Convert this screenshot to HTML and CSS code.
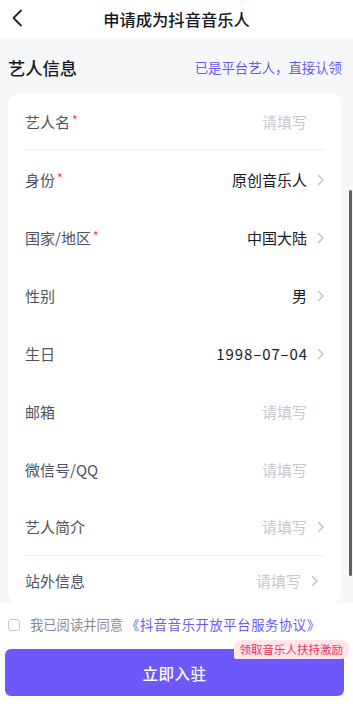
FILE: index.html
```html
<!DOCTYPE html>
<html lang="zh">
<head>
<meta charset="utf-8">
<title>申请成为抖音音乐人</title>
<link rel="stylesheet" href="styles.css">
</head>
<body>
<div class="page">
  <header class="topbar">
    <svg class="back" width="12" height="18" viewBox="0 0 12 18"><path d="M10 1.5 L2.5 9 L10 16.5" fill="none" stroke="#1f2126" stroke-width="1.8" stroke-linecap="round" stroke-linejoin="round"/></svg>
    <h1 class="title">申请成为抖音音乐人</h1>
  </header>
  <main class="scroller">
    <div class="section-head">
      <h2 class="section-title">艺人信息</h2>
      <a class="claim">已是平台艺人，直接认领</a>
    </div>
    <div class="card">
      <div class="row sep">
        <span class="label">艺人名<i class="req">*</i></span>
        <span class="value ph">请填写</span><span class="chev-slot"></span>
      </div>
      <div class="row">
        <span class="label">身份<i class="req">*</i></span>
        <span class="value">原创音乐人</span><span class="chev-slot"><svg width="8" height="12" viewBox="0 0 8 12"><path d="M1.5 1.5 L6 6 L1.5 10.5" fill="none" stroke="#c3c5ca" stroke-width="1.6" stroke-linecap="round" stroke-linejoin="round"/></svg></span>
      </div>
      <div class="row">
        <span class="label">国家/地区<i class="req">*</i></span>
        <span class="value">中国大陆</span><span class="chev-slot"><svg width="8" height="12" viewBox="0 0 8 12"><path d="M1.5 1.5 L6 6 L1.5 10.5" fill="none" stroke="#c3c5ca" stroke-width="1.6" stroke-linecap="round" stroke-linejoin="round"/></svg></span>
      </div>
      <div class="row">
        <span class="label">性别</span>
        <span class="value">男</span><span class="chev-slot"><svg width="8" height="12" viewBox="0 0 8 12"><path d="M1.5 1.5 L6 6 L1.5 10.5" fill="none" stroke="#c3c5ca" stroke-width="1.6" stroke-linecap="round" stroke-linejoin="round"/></svg></span>
      </div>
      <div class="row">
        <span class="label">生日</span>
        <span class="value date">1998–07–04</span><span class="chev-slot"><svg width="8" height="12" viewBox="0 0 8 12"><path d="M1.5 1.5 L6 6 L1.5 10.5" fill="none" stroke="#c3c5ca" stroke-width="1.6" stroke-linecap="round" stroke-linejoin="round"/></svg></span>
      </div>
      <div class="row">
        <span class="label">邮箱</span>
        <span class="value ph">请填写</span><span class="chev-slot"></span>
      </div>
      <div class="row">
        <span class="label">微信号/QQ</span>
        <span class="value ph">请填写</span><span class="chev-slot"></span>
      </div>
      <div class="row sep">
        <span class="label">艺人简介</span>
        <span class="value ph">请填写</span><span class="chev-slot"><svg width="8" height="12" viewBox="0 0 8 12"><path d="M1.5 1.5 L6 6 L1.5 10.5" fill="none" stroke="#c3c5ca" stroke-width="1.6" stroke-linecap="round" stroke-linejoin="round"/></svg></span>
      </div>
      <div class="row last">
        <span class="label">站外信息</span>
        <span class="value ph">请填写</span><span class="chev-slot"><svg width="8" height="12" viewBox="0 0 8 12"><path d="M1.5 1.5 L6 6 L1.5 10.5" fill="none" stroke="#c3c5ca" stroke-width="1.6" stroke-linecap="round" stroke-linejoin="round"/></svg></span>
      </div>
    </div>
    <div class="scrollbar"></div>
  </main>
  <footer class="footer">
    <label class="agree">
      <span class="check"></span>
      <span class="agree-text">我已阅读并同意<a class="protocol">《抖音音乐开放平台服务协议》</a></span>
    </label>
    <div class="submit-wrap">
      <button class="submit">立即入驻</button>
      <span class="badge">领取音乐人扶持激励</span>
    </div>
  </footer>
</div>
</body>
</html>
```

FILE: styles.css
```css
* { box-sizing: border-box; }
html, body { margin: 0; padding: 0; }
body {
  width: 353px;
  height: 718px;
  overflow: hidden;
  background: #fff;
  font-family: "Noto Sans CJK SC", "Noto Sans", sans-serif;
  color: #161823;
}
.page { display: flex; flex-direction: column; height: 718px; }

.topbar {
  height: 38px;
  flex: none;
  display: flex;
  align-items: center;
  justify-content: center;
  position: relative;
  background: #fff;
}
.back { position: absolute; left: 11px; top: 9px; }
.title {
  margin: 0;
  font-size: 16.3px;
  font-weight: 500;
  line-height: 1;
  color: #161823;
}

.scroller {
  height: 565px;
  flex: none;
  background: #f6f7f9;
  overflow: hidden;
  position: relative;
  padding: 0 12px 0 8px;
}
.section-head {
  height: 55px;
  display: flex;
  align-items: center;
  justify-content: space-between;
  padding-top: 5px;
}
.section-title {
  margin: 0;
  font-size: 17.3px;
  font-weight: 500;
  color: #161823;
  line-height: 1;
}
.claim {
  font-size: 13.4px;
  color: #6a5af5;
  line-height: 1;
  margin-right: -1px;
}

.card {
  background: #fff;
  border-radius: 12px;
  padding: 0 16px 0 16px;
}
.row {
  height: 58px;
  display: flex;
  align-items: center;
  font-size: 15px;
  line-height: 1;
}
.row:first-child { height: 57px; }
.row.sep { border-bottom: 1px solid #f2f3f5; }
.row.last { height: 48px; padding-right: 6px; }
.label {
  flex: 1;
  color: #4f535e;
  display: flex;
  align-items: flex-start;
  padding-left: 1px;
}
.req {
  font-style: normal;
  color: #fe2c55;
  font-size: 12px;
  margin-left: 2px;
  margin-top: 0px;
}
.value { color: #161823; }
.value.date { letter-spacing: 0.9px; margin-right: -1px; }
.value.ph { color: #c6c8cd; }
.chev-slot {
  width: 18px;
  display: flex;
  justify-content: flex-end;
  align-items: center;
}
.chev-slot svg { display: block; margin-top: 1px; }

.scrollbar {
  position: absolute;
  right: 1px;
  top: 152px;
  width: 3px;
  height: 386px;
  border-radius: 2px;
  background: #5e6066;
}

.footer {
  flex: 1;
  background: #fff;
  padding: 13px 9px 0 5px;
}
.agree {
  display: flex;
  align-items: center;
  height: 18px;
  padding-left: 3px;
}
.check {
  width: 12px;
  height: 12px;
  border: 1px solid #c6c8cd;
  border-radius: 3px;
  flex: none;
}
.agree-text {
  margin-left: 10px;
  font-size: 13.3px;
  color: #8a8d95;
  line-height: 1;
  white-space: nowrap;
}
.protocol { color: #6a5af5; letter-spacing: 0.6px; margin-left: 3px; }
.submit-wrap {
  position: relative;
  margin-top: 15px;
}
.submit {
  display: block;
  width: 339px;
  height: 47px;
  border: none;
  border-radius: 6px;
  background: #6c58fb;
  color: #fff;
  font-family: "Noto Sans CJK SC", "Noto Sans", sans-serif;
  font-size: 15.5px;
  font-weight: 500;
  letter-spacing: 0.5px;
}
.badge {
  position: absolute;
  top: -9px;
  right: -5px;
  height: 19px;
  padding: 0 6px;
  display: flex;
  align-items: center;
  background: #ffe5ea;
  color: #f0305a;
  font-size: 11.5px;
  line-height: 1;
  border-radius: 8px 8px 8px 2px;
  white-space: nowrap;
}
```
